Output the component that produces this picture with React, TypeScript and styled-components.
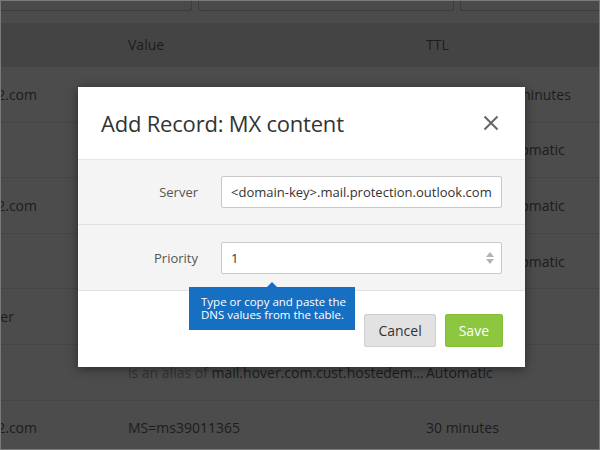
import React from "react";
import styled, { createGlobalStyle } from "styled-components";

const Global = createGlobalStyle`
  html, body { margin: 0; padding: 0; }
  body { font-family: "Open Sans", "Noto Sans", Arial, sans-serif; background: #4c4c4c; }
  * { box-sizing: border-box; }
`;

const Frame = styled.div`
  position: relative;
  width: 600px;
  height: 450px;
  overflow: hidden;
  border: 1px solid #7a7a7a;
  background: #4c4c4c;
`;

const FilterBar = styled.div`
  display: flex;
  gap: 6px;
  height: 22px;
  padding-bottom: 12px;
  margin-left: -20px;
  background: #4b4b4b;
`;

const FilterBox = styled.div<{ $w: number }>`
  flex: 0 0 ${(p) => p.$w}px;
  height: 10px;
  border: 1px solid #3c3c3c;
  border-top: none;
  border-radius: 0 0 3px 3px;
  background: #4a4a4a;
`;

const Table = styled.div`
  display: flex;
  flex-direction: column;
`;

const Row = styled.div<{ $head?: boolean }>`
  display: grid;
  grid-template-columns: 127px 298px 1fr;
  align-items: center;
  height: ${(p) => (p.$head ? "44px" : "55.6px")};
  background: ${(p) => (p.$head ? "#444444" : "#4c4c4c")};
  border-bottom: 1px solid ${(p) => (p.$head ? "#444444" : "#454545")};
  color: #1c1c1c;
  font-size: 14px;
  white-space: nowrap;
`;

const NameCell = styled.div`
  overflow: visible;
  margin-left: -56px;
`;

const Cell = styled.div<{ $indent?: number }>`
  overflow: hidden;
  padding-left: ${(p) => p.$indent ?? 0}px;
`;

const Muted = styled.span`
  color: #333333;
`;

const Modal = styled.div`
  position: absolute;
  left: 77px;
  top: 86px;
  width: 447px;
  height: 280px;
  background: #ffffff;
  box-shadow: 0 2px 10px rgba(0, 0, 0, 0.45);
  display: flex;
  flex-direction: column;
`;

const ModalHeader = styled.div`
  height: 73px;
  display: flex;
  align-items: center;
  justify-content: space-between;
  padding: 0 26px 0 23px;
  border-bottom: 1px solid #e6e6e6;
`;

const Title = styled.h2`
  margin: 0;
  font-weight: 400;
  font-size: 22px;
  color: #333333;
  letter-spacing: -0.2px;
`;

const CloseButton = styled.button`
  border: none;
  background: none;
  padding: 0;
  width: 16px;
  height: 16px;
  display: flex;
  align-items: center;
  justify-content: center;
  cursor: pointer;
`;

const Body = styled.div`
  background: #f4f4f4;
  border-bottom: 1px solid #e2e2e2;
`;

const FieldRow = styled.div<{ $last?: boolean }>`
  display: grid;
  grid-template-columns: 120px 281px;
  column-gap: 23px;
  align-items: center;
  height: 65px;
  border-bottom: ${(p) => (p.$last ? "none" : "1px solid #e0e0e0")};
`;

const Label = styled.label`
  text-align: right;
  font-size: 13px;
  color: #555555;
`;

const InputWrap = styled.div`
  position: relative;
  height: 32px;
  border: 1px solid #c9c9c9;
  border-radius: 2px;
  background: #ffffff;
  display: flex;
  align-items: center;
  padding-left: 9px;
  font-size: 13px;
  color: #333333;
  white-space: nowrap;
`;

const Spinner = styled.div`
  position: absolute;
  right: 7px;
  top: 9px;
  display: flex;
  flex-direction: column;
  gap: 2px;
`;

const Footer = styled.div`
  position: relative;
  flex: 1;
  display: flex;
  justify-content: flex-end;
  align-items: flex-end;
  gap: 9px;
  padding: 0 22px 20px;
`;

const Button = styled.button<{ $primary?: boolean }>`
  height: 33px;
  padding: 0 13px;
  border-radius: 2px;
  border: 1px solid ${(p) => (p.$primary ? "#84bd37" : "#cfcfcf")};
  background: ${(p) => (p.$primary ? "#8dc63f" : "#e2e2e2")};
  color: ${(p) => (p.$primary ? "#ffffff" : "#333333")};
  font-family: inherit;
  font-size: 14px;
`;

const Tooltip = styled.div`
  position: absolute;
  left: 111px;
  top: 200px;
  width: 166px;
  height: 43px;
  background: #176fc1;
  color: #ffffff;
  font-size: 11.5px;
  line-height: 13px;
  padding: 8px 0 0 12px;
  &::before {
    content: "";
    position: absolute;
    left: 78px;
    top: -5px;
    border-left: 5px solid transparent;
    border-right: 5px solid transparent;
    border-bottom: 5px solid #176fc1;
  }
`;

const rows = [
  { name: "contoso2.com", value: "", ttl: "30 minutes", indent: 72 },
  { name: "", value: "", ttl: "Automatic", indent: 72 },
  { name: "contoso2.com", value: "", ttl: "Automatic", indent: 72 },
  { name: "", value: "", ttl: "Automatic", indent: 72 },
  { name: "newsletter", value: "", ttl: "", indent: 0 },
  { name: "", value: "alias", ttl: "Automatic", indent: 0 },
  { name: "contoso2.com", value: "MS=ms39011365", ttl: "30 minutes", indent: 0 },
];

export default function App() {
  return (
    <>
      <Global />
      <Frame>
        <FilterBar>
          <FilterBox $w={211} />
          <FilterBox $w={256} />
          <FilterBox $w={160} />
        </FilterBar>
        <Table>
          <Row $head>
            <Cell />
            <Cell>Value</Cell>
            <Cell>TTL</Cell>
          </Row>
          {rows.map((r, i) => (
            <Row key={i}>
              <NameCell>{r.name}</NameCell>
              <Cell>
                {r.value === "alias" ? (
                  <>
                    <Muted>is an alias of </Muted>mail.hover.com.cust.hostedem...
                  </>
                ) : (
                  r.value
                )}
              </Cell>
              <Cell $indent={r.indent}>{r.ttl}</Cell>
            </Row>
          ))}
        </Table>
        <Modal>
          <ModalHeader>
            <Title>Add Record: MX content</Title>
            <CloseButton aria-label="Close">
              <svg width="16" height="16" viewBox="0 0 16 16">
                <path d="M1.5 1.5 L14.5 14.5 M14.5 1.5 L1.5 14.5" stroke="#666" strokeWidth="2" />
              </svg>
            </CloseButton>
          </ModalHeader>
          <Body>
            <FieldRow>
              <Label>Server</Label>
              <InputWrap>&lt;domain-key&gt;.mail.protection.outlook.com</InputWrap>
            </FieldRow>
            <FieldRow $last>
              <Label>Priority</Label>
              <InputWrap>
                1
                <Spinner>
                  <svg width="8" height="5" viewBox="0 0 8 5">
                    <path d="M0 5 L4 0 L8 5 Z" fill="#b3b3b3" />
                  </svg>
                  <svg width="8" height="5" viewBox="0 0 8 5">
                    <path d="M0 0 L4 5 L8 0 Z" fill="#b3b3b3" />
                  </svg>
                </Spinner>
              </InputWrap>
            </FieldRow>
          </Body>
          <Footer>
            <Button>Cancel</Button>
            <Button $primary>Save</Button>
          </Footer>
          <Tooltip>
            Type or copy and paste the
            <br />
            DNS values from the table.
          </Tooltip>
        </Modal>
      </Frame>
    </>
  );
}
